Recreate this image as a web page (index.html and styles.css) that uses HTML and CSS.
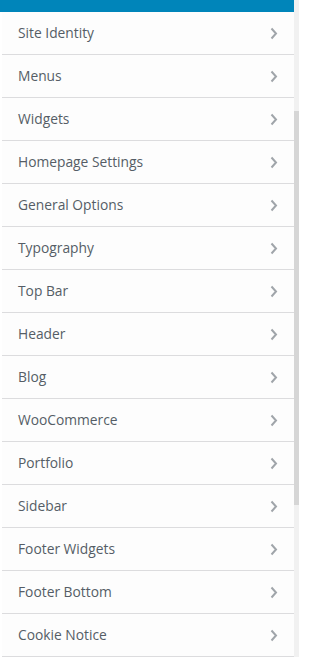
FILE: index.html
```html
<!DOCTYPE html>
<html>
<head>
<meta charset="utf-8">
<link rel="stylesheet" href="styles.css">
</head>
<body>
<div class="frame">
  <div class="panel">
    <div class="topbar"></div>
    <ul class="sections">
      <li class="section"><span class="title">Site Identity</span><svg class="chev" viewBox="0 0 8 13"><path d="M1.5 1.5 L6 6.5 L1.5 11.5"/></svg></li>
      <li class="section"><span class="title">Menus</span><svg class="chev" viewBox="0 0 8 13"><path d="M1.5 1.5 L6 6.5 L1.5 11.5"/></svg></li>
      <li class="section"><span class="title">Widgets</span><svg class="chev" viewBox="0 0 8 13"><path d="M1.5 1.5 L6 6.5 L1.5 11.5"/></svg></li>
      <li class="section"><span class="title">Homepage Settings</span><svg class="chev" viewBox="0 0 8 13"><path d="M1.5 1.5 L6 6.5 L1.5 11.5"/></svg></li>
      <li class="section"><span class="title">General Options</span><svg class="chev" viewBox="0 0 8 13"><path d="M1.5 1.5 L6 6.5 L1.5 11.5"/></svg></li>
      <li class="section"><span class="title">Typography</span><svg class="chev" viewBox="0 0 8 13"><path d="M1.5 1.5 L6 6.5 L1.5 11.5"/></svg></li>
      <li class="section"><span class="title">Top Bar</span><svg class="chev" viewBox="0 0 8 13"><path d="M1.5 1.5 L6 6.5 L1.5 11.5"/></svg></li>
      <li class="section"><span class="title">Header</span><svg class="chev" viewBox="0 0 8 13"><path d="M1.5 1.5 L6 6.5 L1.5 11.5"/></svg></li>
      <li class="section"><span class="title">Blog</span><svg class="chev" viewBox="0 0 8 13"><path d="M1.5 1.5 L6 6.5 L1.5 11.5"/></svg></li>
      <li class="section"><span class="title">WooCommerce</span><svg class="chev" viewBox="0 0 8 13"><path d="M1.5 1.5 L6 6.5 L1.5 11.5"/></svg></li>
      <li class="section"><span class="title">Portfolio</span><svg class="chev" viewBox="0 0 8 13"><path d="M1.5 1.5 L6 6.5 L1.5 11.5"/></svg></li>
      <li class="section"><span class="title">Sidebar</span><svg class="chev" viewBox="0 0 8 13"><path d="M1.5 1.5 L6 6.5 L1.5 11.5"/></svg></li>
      <li class="section"><span class="title">Footer Widgets</span><svg class="chev" viewBox="0 0 8 13"><path d="M1.5 1.5 L6 6.5 L1.5 11.5"/></svg></li>
      <li class="section"><span class="title">Footer Bottom</span><svg class="chev" viewBox="0 0 8 13"><path d="M1.5 1.5 L6 6.5 L1.5 11.5"/></svg></li>
      <li class="section"><span class="title">Cookie Notice</span><svg class="chev" viewBox="0 0 8 13"><path d="M1.5 1.5 L6 6.5 L1.5 11.5"/></svg></li>
    </ul>
  </div>
  <div class="scrollbar"><div class="thumb"></div></div>
</div>
</body>
</html>
```
FILE: styles.css
```css
html, body {
  margin: 0;
  padding: 0;
  background: #ffffff;
  overflow: hidden;
}
.frame {
  display: flex;
  width: 299px;
  height: 657px;
}
.panel {
  width: 294px;
  flex: none;
  background: #fff;
}
.topbar {
  height: 12px;
  background: #0085ba;
}
.sections {
  list-style: none;
  margin: 0;
  padding: 0 0 0 2px;
}
.section {
  display: flex;
  align-items: center;
  justify-content: space-between;
  height: 42px;
  border-bottom: 1px solid #dcdcde;
  padding: 0 16px 0 16px;
  background: #fdfdfd;
  font-family: "Open Sans", "Noto Sans", sans-serif;
  font-size: 13.8px;
  font-weight: 500;
  color: #555d66;
}
.title {
  line-height: 18px;
}
.chev {
  width: 8px;
  height: 13px;
  fill: none;
  stroke: #a0a5aa;
  stroke-width: 2;
}
.scrollbar {
  flex: none;
  width: 5px;
  height: 657px;
  background: #f1f1f1;
  padding-top: 111px;
  box-sizing: border-box;
}
.thumb {
  height: 394px;
  background: #d6d6d6;
}
```
